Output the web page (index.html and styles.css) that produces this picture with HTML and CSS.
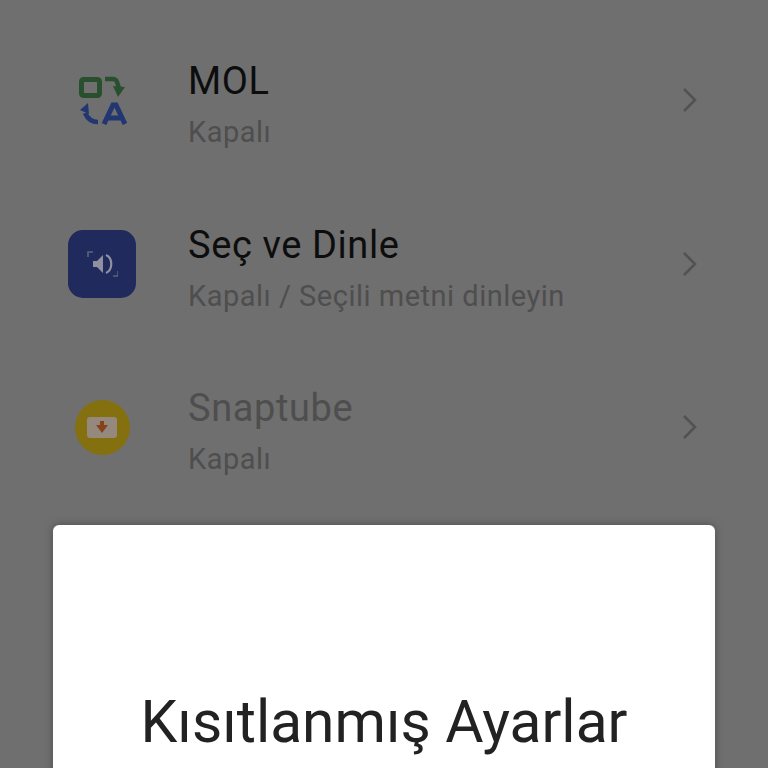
FILE: index.html
```html
<!DOCTYPE html>
<html lang="tr">
<head>
  <meta charset="UTF-8">
  <meta name="viewport" content="width=device-width, initial-scale=1.0">
  <title>Kısıtlanmış Ayarlar</title>
  <link rel="stylesheet" href="styles.css">
</head>
<body>
  <!-- Accessibility app list -->
  <div class="app-list">
    <div class="app-row">
      <div class="app-icon">
        <svg width="50" height="50" viewBox="0 0 50 50">
          <rect x="4.5" y="4.5" width="18" height="16" rx="2" fill="none" stroke="#28502f" stroke-width="5"/>
          <path d="M28 4h8q3 0 4 3l2 6" fill="none" stroke="#28502f" stroke-width="4.4"/>
          <path d="M36 11l12 1-7 10z" fill="#28502f"/>
          <path d="M21 47q-9 0-13-9" fill="none" stroke="#223672" stroke-width="4.6"/>
          <path d="M3 35l8-7 1 11z" fill="#223672"/>
          <path d="M27 49l9-19h3l9 19M31 43h13" fill="none" stroke="#223672" stroke-width="5"/>
        </svg>
      </div>
      <div class="app-text">
        <div class="app-name">MOL</div>
        <div class="app-status">Kapalı</div>
      </div>
      <svg class="chevron" width="16" height="26" viewBox="0 0 16 26"><path d="M2 2l11 11L2 24" fill="none" stroke="#525252" stroke-width="2.6"/></svg>
    </div>

    <div class="app-row">
      <div class="app-icon">
        <div class="select-icon">
          <svg width="32" height="32" viewBox="0 0 32 32">
            <path d="M2 9V4h5M32 23v5h-5" fill="none" stroke="#5c6280" stroke-width="1.6"/>
            <path d="M7 13h4l6-6v18l-6-6H7z" fill="#8f919e"/>
            <path d="M20 7c7 3 7 15 0 18" fill="none" stroke="#8f919e" stroke-width="2.2"/>
          </svg>
        </div>
      </div>
      <div class="app-text">
        <div class="app-name">Seç ve Dinle</div>
        <div class="app-status">Kapalı / Seçili metni dinleyin</div>
      </div>
      <svg class="chevron" width="16" height="26" viewBox="0 0 16 26"><path d="M2 2l11 11L2 24" fill="none" stroke="#525252" stroke-width="2.6"/></svg>
    </div>

    <div class="app-row">
      <div class="app-icon">
        <div class="snaptube-icon">
          <div class="snaptube-screen">
            <svg width="12" height="12" viewBox="0 0 12 12"><path d="M4 0h4v4h4l-6 8-6-8h4z" fill="#84431c"/></svg>
          </div>
        </div>
      </div>
      <div class="app-text">
        <div class="app-name disabled">Snaptube</div>
        <div class="app-status">Kapalı</div>
      </div>
      <svg class="chevron" width="16" height="26" viewBox="0 0 16 26"><path d="M2 2l11 11L2 24" fill="none" stroke="#525252" stroke-width="2.6"/></svg>
    </div>
  </div>

  <!-- Restricted settings dialog -->
  <div class="dialog">
    <h1 class="dialog-title">Kısıtlanmış Ayarlar</h1>
  </div>
</body>
</html>
```

FILE: styles.css
```css
body {
  margin: 0;
  width: 768px;
  height: 768px;
  overflow: hidden;
  position: relative;
  background: #6f6f6f;
  font-family: Roboto, "Noto Sans", sans-serif;
}

.app-list {
  padding-top: 18.5px;
  padding-left: 68px;
  padding-right: 70px;
}

.app-row {
  display: flex;
  align-items: center;
  height: 163.5px;
}

.app-icon {
  width: 68px;
  height: 68px;
  display: flex;
  align-items: center;
  justify-content: center;
  margin-right: 52px;
  flex-shrink: 0;
}

.app-text {
  flex: 1;
  padding-top: 8px;
}

.app-name {
  font-size: 38px;
  line-height: 44px;
  letter-spacing: 0.6px;
  color: #0d0d0d;
}

.app-name.disabled {
  color: #4e4e4e;
}

.app-status {
  font-size: 29px;
  line-height: 34px;
  letter-spacing: 0.5px;
  margin-top: 12px;
  color: #4e4e4e;
}

.select-icon {
  width: 68px;
  height: 68px;
  border-radius: 15px;
  background: #202a5c;
  display: flex;
  align-items: center;
  justify-content: center;
}

.snaptube-icon {
  width: 55px;
  height: 55px;
  border-radius: 50%;
  background: #857010;
  display: flex;
  align-items: center;
  justify-content: center;
}

.snaptube-screen {
  width: 30px;
  height: 21px;
  border-radius: 3px;
  background: #94897c;
  display: flex;
  align-items: center;
  justify-content: center;
}

.dialog {
  position: absolute;
  left: 53px;
  top: 525px;
  width: 662px;
  height: 260px;
  background: #fff;
  border-radius: 6px;
  box-shadow: 0 0 8px rgba(0, 0, 0, 0.3);
  text-align: center;
}

.dialog-title {
  margin: 161px 0 0;
  font-size: 58.7px;
  line-height: 72px;
  font-weight: 400;
  color: #222;
}
```
